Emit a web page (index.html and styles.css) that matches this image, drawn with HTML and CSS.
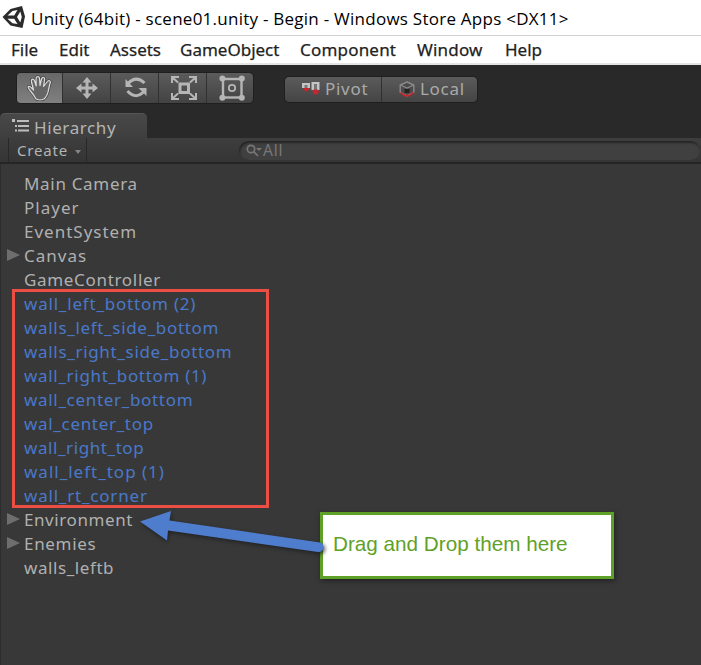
FILE: index.html
```html
<!DOCTYPE html>
<html lang="en">
<head>
<meta charset="utf-8">
<title>Unity (64bit) - scene01.unity</title>
<link rel="stylesheet" href="styles.css">
</head>
<body>
<header class="titlebar">
  <svg class="logo" width="24" height="24" viewBox="0 0 24 24"><path fill="#2b2b2b" fill-rule="evenodd" d="M1.500 12 L9.500 4 L21 1 L24 11.500 L21.500 23 L9.500 20.500 Z M6.500 10.600 L13.200 10.600 L16.500 5 L11.500 6 Z M19.300 6.500 L16 12 L19.300 17.500 L20.800 12 Z M6.500 13.700 L11.500 18.200 L16.500 19 L13.200 13.700 Z"/></svg>
  <span class="title">Unity (64bit) - scene01.unity - Begin - Windows Store Apps &lt;DX11&gt;</span>
</header>
<nav class="menu">
  <span class="m-file">File</span><span class="m-edit">Edit</span><span class="m-assets">Assets</span><span class="m-game">GameObject</span><span class="m-comp">Component</span><span class="m-window">Window</span><span class="m-help">Help</span>
</nav>
<div class="toolbar">
  <div class="tools">
    <button class="tool active"><svg width="26" height="26" viewBox="0 0 26 26"><path fill="#626262" stroke="#3f3f3f" stroke-width="2.600" stroke-linejoin="round" d="M9 24 Q7 20 3 15.500 Q0 12 1.800 11.300 Q3.300 11 6.500 15 L4.500 7 Q4 4.500 5.500 4.200 Q7 4 8 7 L9.200 11 L9 4 Q9 1.500 10.800 1.500 Q12.500 1.500 12.600 4 L13 10.500 L14.500 4 Q15.200 2 16.700 2.500 Q18 3 17.500 5.500 L16.500 11.500 L20 7 Q21.500 5 22.800 6 Q24 7 22.800 9 L21.500 15 Q20.500 21 17 24 Q13 26 9 24 Z"/><path fill="#666" stroke="#dcdcdc" stroke-width="1.200" stroke-linejoin="round" d="M9 24 Q7 20 3 15.500 Q0 12 1.800 11.300 Q3.300 11 6.500 15 L4.500 7 Q4 4.500 5.500 4.200 Q7 4 8 7 L9.200 11 L9 4 Q9 1.500 10.800 1.500 Q12.500 1.500 12.600 4 L13 10.500 L14.500 4 Q15.200 2 16.700 2.500 Q18 3 17.500 5.500 L16.500 11.500 L20 7 Q21.500 5 22.800 6 Q24 7 22.800 9 L21.500 15 Q20.500 21 17 24 Q13 26 9 24 Z"/></svg></button>
    <button class="tool"><svg width="22" height="22" viewBox="0 0 22 22"><path fill="#b5b5b5" d="M11 0 L15.5 5.5 H12.5 V9.5 H16.5 V6.5 L22 11 L16.5 15.5 V12.5 H12.5 V16.5 H15.5 L11 22 L6.5 16.5 H9.5 V12.5 H5.5 V15.5 L0 11 L5.5 6.5 V9.5 H9.5 V5.5 H6.5 Z"/></svg></button>
    <button class="tool rotate"><svg width="24" height="24" viewBox="0 0 24 24"><g fill="none" stroke="#b5b5b5" stroke-width="3"><path d="M4 7.5 Q12 -1 20.5 7"/><path d="M3.5 15 Q11.5 24 20 15.5"/></g><path fill="#b5b5b5" d="M1.5 3 V11 H9 Z M22.5 20 V12 H14.5 Z"/></svg></button>
    <button class="tool scale"><svg width="26" height="24" viewBox="0 0 26 24"><g fill="none" stroke="#b5b5b5"><rect x="9" y="8" width="8.5" height="8.5" stroke-width="3"/><path stroke-width="2" d="M1 7 V1 H8 M1 1 L7 6.5 M25 7 V1 H18 M25 1 L19 6.5 M1 17 V23 H8 M1 23 L7 17.5 M25 17 V23 H18 M25 23 L19 17.5"/></g></svg></button>
    <button class="tool"><svg width="26" height="26" viewBox="0 0 26 26"><rect x="4" y="4" width="18.5" height="18.5" fill="none" stroke="#b5b5b5" stroke-width="2.4"/><g fill="#b5b5b5"><circle cx="3.4" cy="3.4" r="3"/><circle cx="22.8" cy="3.4" r="3"/><circle cx="3.4" cy="22.8" r="3"/><circle cx="22.8" cy="22.8" r="3"/></g><circle cx="13" cy="13" r="3.2" fill="none" stroke="#b5b5b5" stroke-width="1.8"/></svg></button>
  </div>
  <div class="handles">
    <button class="handle pivot"><svg width="18" height="14" viewBox="0 0 18 14"><path fill="#c4c4c4" d="M0 1 H8 V6 H0 Z M9.5 0 H17.5 V8 H9.5 Z"/><path fill="#777" d="M2.500 3 H5.500 V6 H2.500 Z M12 2 H15 V8 H12 Z"/><path fill="#c8252f" d="M1 6 H7.500 L6 8.500 L4.200 9.500 L2.500 8.500 Z M10.500 8.500 L12 7.500 H15.500 L17 9.500 L15.500 12 L13.500 12.800 L11.500 11.800 Z"/></svg><span>Pivot</span></button>
    <button class="handle local"><svg width="16" height="17" viewBox="0 0 16 17"><path fill="#4a4a4a" stroke="#8a8a8a" stroke-width="1.400" d="M8 1 L14.800 4 V11 L8 15 L1.200 11 V4 Z"/><path fill="none" stroke="#8a8a8a" stroke-width="1.3" d="M1.200 4 L8 7 L14.800 4"/><path fill="#222" d="M5.500 8 H10.500 V12 H5.500 Z"/><path fill="none" stroke="#c8252f" stroke-width="1.8" d="M1.500 11.500 L6 14.700 H10 L14.500 11.500"/></svg><span>Local</span></button>
  </div>
</div>
<div class="tabs">
  <div class="tab"><svg width="18" height="14" viewBox="0 0 18 14"><path fill="#bdbdbd" d="M0 0 H3 V3 H0 Z M5 1 H17 V3 H5 Z M3 6 H5 V8 H3 Z M6 6 H17 V8 H6 Z M3 10.500 H5 V12.500 H3 Z M6 10.500 H17 V12.500 H6 Z"/></svg><span>Hierarchy</span></div>
</div>
<div class="bar">
  <div class="create"><span>Create</span><i class="caret"></i></div>
  <div class="search"><svg width="17" height="13" viewBox="0 0 17 13"><g fill="none" stroke="#777" stroke-width="1.7"><circle cx="5" cy="5" r="3.700"/><path d="M7.700 7.700 L12 12"/></g><path fill="#777" d="M10 4 H16 L13 7 Z"/></svg><span>All</span></div>
</div>
<main class="tree">
  <div class="row"><span>Main Camera</span></div>
  <div class="row loose"><span>Player</span></div>
  <div class="row loose"><span>EventSystem</span></div>
  <div class="row parent loose"><span>Canvas</span></div>
  <div class="row"><span>GameController</span></div>
  <div class="row prefab numbered"><span>wall_left_bottom (2)</span></div>
  <div class="row prefab"><span>walls_left_side_bottom</span></div>
  <div class="row prefab"><span>walls_right_side_bottom</span></div>
  <div class="row prefab"><span>wall_right_bottom (1)</span></div>
  <div class="row prefab"><span>wall_center_bottom</span></div>
  <div class="row prefab"><span>wal_center_top</span></div>
  <div class="row prefab tight"><span>wall_right_top</span></div>
  <div class="row prefab loose"><span>wall_left_top (1)</span></div>
  <div class="row prefab numbered"><span>wall_rt_corner</span></div>
  <div class="row parent tight"><span>Environment</span></div>
  <div class="row parent"><span>Enemies</span></div>
  <div class="row tight"><span>walls_leftb</span></div>
</main>
<div class="outline"></div>
<div class="callout">Drag and Drop them here</div>
<svg class="arrow" width="200" height="50" viewBox="0 0 200 50"><path fill="#4f7dcd" d="M5 16.500 L36 6 L34.500 15.500 L185 37.500 Q189 38.500 188.500 43 Q187 47.500 183 47 L33 25.500 L32 35.500 Z"/></svg>
</body>
</html>
```
FILE: styles.css
```css
* { box-sizing: border-box; }
body { margin: 0; width: 701px; height: 665px; overflow: hidden; position: relative; background: #383838; font-family: "Noto Sans", sans-serif; }
.titlebar { height: 36px; background: #fff; border-bottom: 1px solid #d2d2d2; display: flex; align-items: center; padding: 2px 0 0 1px; }
.logo { margin-top: -4px; }
.title { margin-left: 6px; font: 17px/24px "Open Sans", sans-serif; letter-spacing: .25px; color: #000; white-space: nowrap; }
.menu { height: 29px; background: #fff; border-bottom: 2px solid #e4e4e4; padding-left: 11px; display: flex; font-size: 17px; line-height: 28px; color: #222; -webkit-text-stroke: .25px #222; }
.menu span { white-space: nowrap; flex: none; }
.m-file { width: 48px; }
.m-edit { width: 51px; }
.m-assets { width: 70px; }
.m-game { width: 120px; }
.m-comp { width: 117px; letter-spacing: .2px; }
.m-window { width: 88px; letter-spacing: .2px; }
.toolbar { height: 48px; background: #292929; display: flex; align-items: flex-start; padding: 7px 0 0 16px; }
button { border: 0; padding: 0; margin: 0; font: inherit; }
.tools { display: flex; width: 238px; height: 32px; border-radius: 5px; overflow: hidden; border: 1px solid #1f1f1f; background: linear-gradient(#5b5b5b, #434343); }
.tool { width: 48px; flex: none; background: none; border-right: 1px solid #303030; display: flex; align-items: center; justify-content: center; }
.tool:first-child { width: 46px; }
.tool:last-child { border: 0; width: 46px; padding-left: 3px; }
.rotate, .scale { padding-left: 3px; }
.active { background: linear-gradient(#686868, #808080); }
.handles { margin: 4px 0 0 30px; display: flex; width: 194px; height: 27px; border: 1px solid #1f1f1f; border-radius: 5px; overflow: hidden; background: linear-gradient(#5b5b5b, #444); }
.handle { background: none; display: flex; align-items: center; color: #aaa; font-size: 17px; line-height: 24px; letter-spacing: .7px; padding-bottom: 1px; }
.pivot { width: 97px; border-right: 1px solid #303030; padding-left: 17px; }
.local { padding-left: 17px; }
.handle span { margin-left: 5px; }
.tabs { height: 25px; background: #292929; }
.tab { width: 147px; height: 26px; border-radius: 5px 5px 0 0; border-top: 1px solid #565656; background: linear-gradient(#484848, #3e3e3e); color: #b4b4b4; display: flex; align-items: center; padding: 2px 0 0 12px; font-size: 17px; letter-spacing: .6px; }
.tab svg { margin-top: -3px; }
.tab span { margin-left: 4px; }
.bar { height: 26px; background: linear-gradient(#3e3e3e, #343434); border-bottom: 2px solid #252525; display: flex; padding-left: 8px; }
.create { width: 79px; border-left: 1px solid #282828; border-right: 1px solid #282828; color: #b4b4b4; font-size: 15px; line-height: 26px; letter-spacing: .8px; padding-left: 8px; display: flex; align-items: center; }
.caret { border: 3.5px solid transparent; border-top: 4px solid #858585; border-bottom: 0; margin: 3px 0 0 7px; }
.search { margin: 3px 0 0 152px; width: 461px; height: 19px; border-radius: 10px; background: #404040; box-shadow: inset 1px 2px 2px #252525; display: flex; align-items: center; padding: 0 0 1px 7px; color: #777; font-size: 15.5px; letter-spacing: .8px; }
.tree { height: 501px; border-left: 1px solid #2d2d2d; padding-top: 8px; }
.row { height: 24px; padding-left: 23px; font-size: 17px; line-height: 24px; letter-spacing: .68px; color: #b0b0b0; white-space: nowrap; display: flex; align-items: center; }
.loose { letter-spacing: 1px; }
.tight { letter-spacing: .58px; }
.numbered { letter-spacing: .8px; }
.parent::before { content: ""; border: 6.5px solid transparent; border-left: 13px solid #6e6e6e; border-right: 0; margin: -2px 4px 0 -17px; }
.prefab { color: #4a78c9; }
.outline { position: absolute; left: 12px; top: 289px; width: 257px; height: 219px; border: 3px solid #ed4e44; }
.callout { position: absolute; left: 320px; top: 512px; width: 294px; height: 67px; background: #fff; border: 3px solid #5fa127; box-shadow: 1px 2px 5px #222; padding: 0 10px 2px; color: #5fa127; font: 20.7px/57px "Liberation Sans", Arial, sans-serif; white-space: nowrap; }
.arrow { position: absolute; left: 135px; top: 505px; filter: drop-shadow(1px 2px 2px #222); }
```
